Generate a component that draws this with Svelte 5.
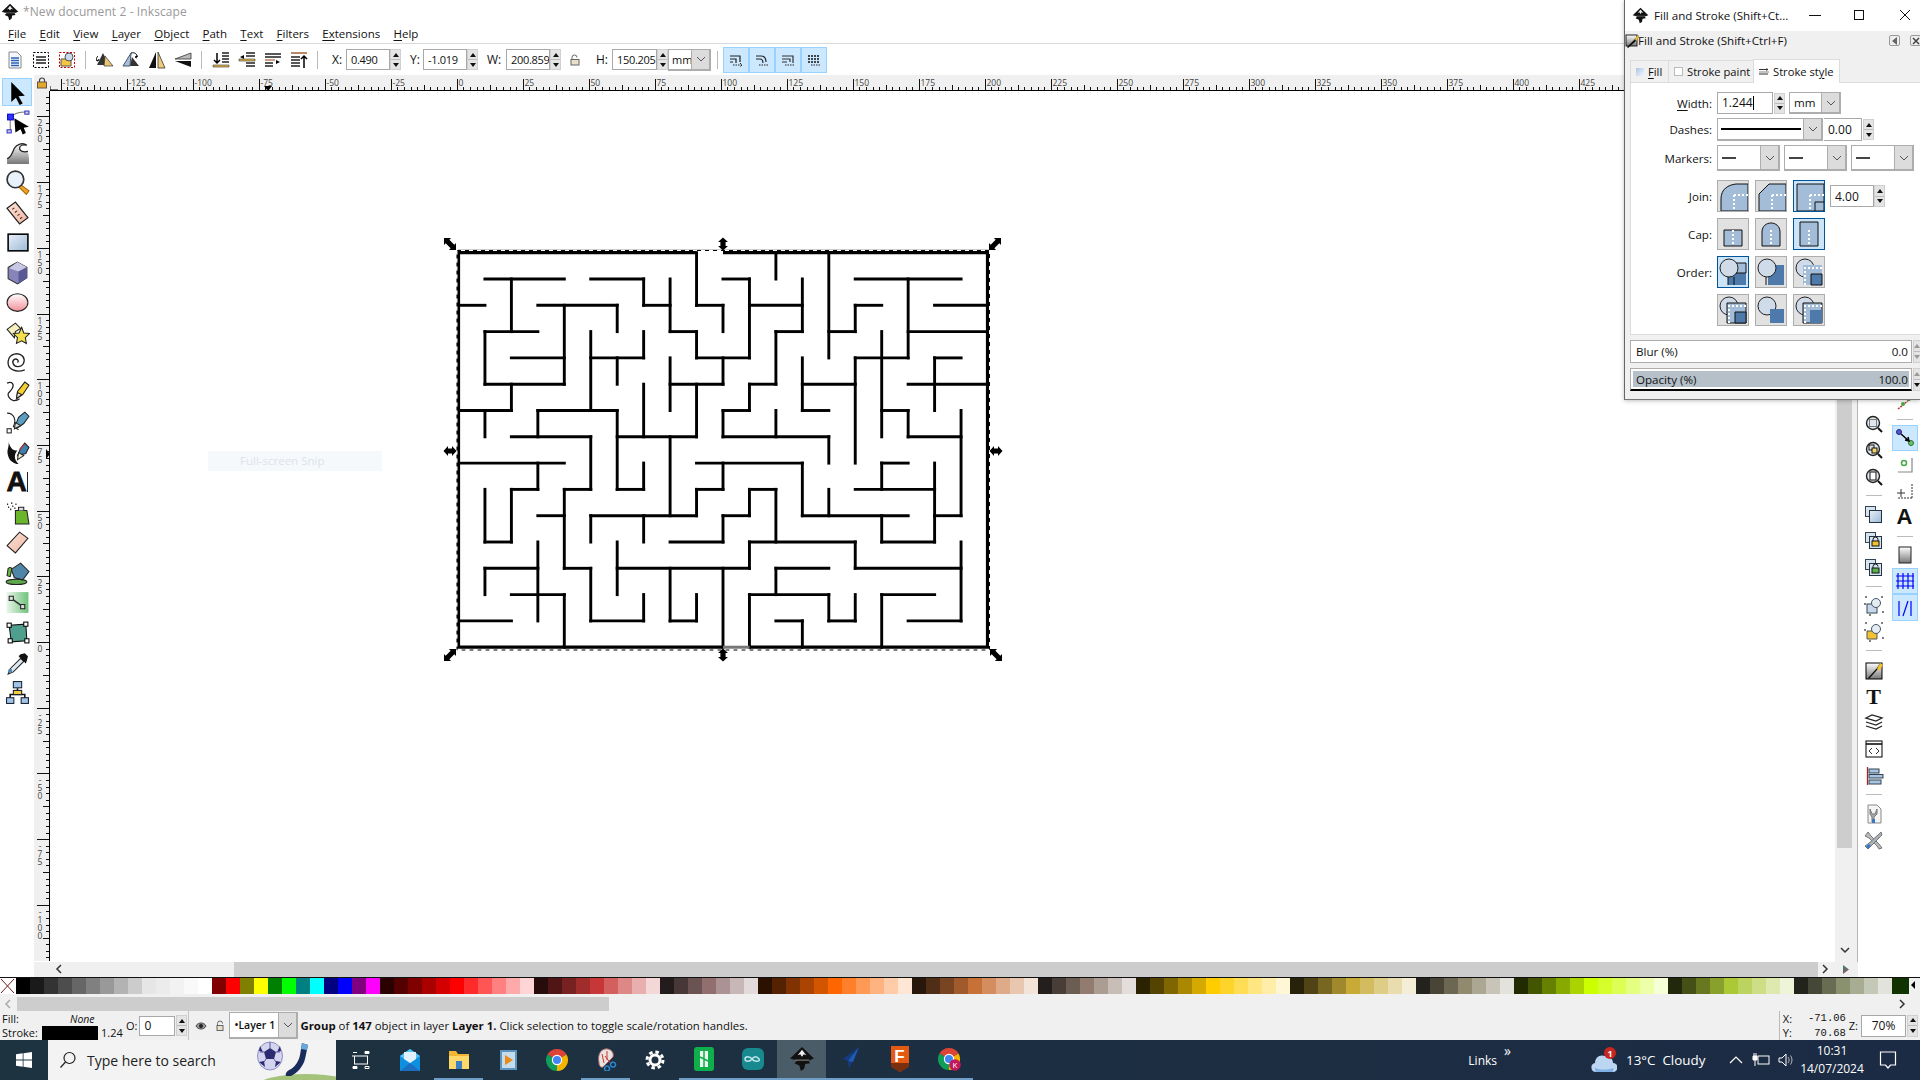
<script>
  const menus = [['F','ile'],['E','dit'],['V','iew'],['L','ayer'],['O','bject'],['P','ath'],['T','ext'],['F','ilters'],['Ex','tensions'],['H','elp']];

  const greys = ['#000','#1a1a1a','#333','#4d4d4d','#666','#808080','#999','#b3b3b3','#ccc','#e6e6e6','#ececec','#f2f2f2','#f9f9f9','#fff'];
  const basics = ['#800000','#f00','#808000','#ff0','#008000','#0f0','#008080','#0ff','#000080','#00f','#800080','#f0f'];
  const families = [
    '#2b0000,#550000,#800000,#aa0000,#d40000,#ff0000,#ff2a2a,#ff5555,#ff8080,#ffaaaa,#ffd5d5,#280b0b,#501616,#782121,#a02c2c,#c83737,#d35f5f,#de8787,#e9afaf,#f4d7d7,#241c1c,#483737,#6c5353,#916f6f,#ac9393,#c8b7b7,#e3dbdb',
    '#2b1100,#552200,#803300,#aa4400,#d45500,#ff6600,#ff7f2a,#ff9955,#ffb380,#ffccaa,#ffe6d5,#28170b,#502d16,#784421,#a05a2c,#c87137,#d38d5f,#deaa87,#e9c6af,#f4e3d7,#241f1c,#483e37,#6c5d53,#917c6f,#ac9d93,#c8beb7,#e3dedb',
    '#2b2200,#554400,#806600,#aa8800,#d4aa00,#ffcc00,#ffd42a,#ffdd55,#ffe680,#ffeeaa,#fff6d5,#28220b,#504416,#786721,#a0892c,#c8ab37,#d3bc5f,#decd87,#e9ddaf,#f4eed7,#24221c,#484537,#6c6753,#918a6f,#aca793,#c8c4b7,#e3e2db',
    '#222b00,#445500,#668000,#88aa00,#aad400,#ccff00,#d4ff2a,#ddff55,#e5ff80,#eeffaa,#f6ffd5,#22280b,#445016,#677821,#89a02c,#abc837,#bcd35f,#cdde87,#dde9af,#eef4d7,#22241c,#454837,#676c53,#8a916f,#a7ac93,#c4c8b7,#e2e3db',
    '#113300'
  ];
  const palette = [...greys, ...basics, ...families.join(',').split(',')];

  // maze walls, in cell units: [line, from, to]
  const hw = {1:'1-4,5-7,10-11,15-19',2:'0-1,3-6,7-8,9-10,11-13,15-16,18-20',3:'1-3,8-9,12-13,14-15,17-20',4:'2-4,5-7,9-11,15-17,18-19',5:'1-4,8-10,11-12,13-15,17-20',6:'0-2,3-6,10-11,13-14,16-17',7:'2-5,6-9,10-14,17-19',8:'0-4,9-13,16-17',9:'2-3,4-5,6-7,9-10,11-12,15-18',10:'3-4,5-9,10-11,13-17,18-19',11:'1-2,8-10,11-15,16-18',12:'1-3,4-5,6-11,12-14,15-19',13:'2-4,11-14,16-18',14:'0-2,5-7,8-9,12-13,14-15,17-19'};
  const vw = {1:'3-5,6-7,9-11,12-13',2:'1-3,5-6,9-11',3:'6-7,8-9,11-14',4:'2-5,9-12,13-15',5:'3-6,7-9,10-11,12-14',6:'2-3,4-5,6-9,11-13',7:'1-2,3-4,5-7,8-9,10-11,13-14',8:'1-3,4-6,7-10,12-14',9:'0-2,3-4,5-7,9-10,13-14',10:'2-3,4-5,6-7,8-9,10-11,12-15',11:'1-4,5-6,9-10,11-12,13-15',12:'0-1,3-5,6-7,9-11,12-13',13:'1-3,4-6,8-10,14-15',14:'0-4,7-8,9-10,13-14',15:'2-3,4-8,11-12,13-14',16:'3-7,8-9,10-11,13-15',17:'1-4,6-7',18:'4-6,8-11',19:'6-10,11-14'};
  const mx = (i) => 458.5 + 26.45 * i;
  const my = (j) => 252.7 + 26.3 * j;
  const walls = [];
  for (const k in hw) for (const s of hw[k].split(',')) { const [a, b] = s.split('-').map(Number); walls.push([mx(a) - 1.5, my(+k), mx(b) + 1.5, my(+k)]); }
  for (const k in vw) for (const s of vw[k].split(',')) { const [a, b] = s.split('-').map(Number); walls.push([mx(+k), my(a) - 1.5, mx(+k), my(b) + 1.5]); }

  const corners = [[450,244,-135],[995,244,-45],[450,655,135],[996,655,45]];
  const sides = [[723,244,90],[450,451,0],[996,451,0],[723,655,90]];

  // rulers
  const topTicks = [], topLabels = [];
  for (let n = -60; n < 180; n++) {
    const x = Math.round(456.7 + 6.6 * n) + 0.5;
    if (x < 52 || x > 1836) continue;
    const major = n % 10 === 0;
    topTicks.push([x, major ? 79 : n % 5 === 0 ? 85 : 87]);
    if (major) topLabels.push([x + 1, n * 2.5]);
  }
  const leftTicks = [], leftLabels = [];
  for (let n = -120; n < 90; n++) {
    const y = Math.round(642 - 6.57 * n) + 0.5;
    if (y < 93 || y > 958) continue;
    const major = n % 10 === 0;
    leftTicks.push([y, major ? 37 : n % 5 === 0 ? 43 : 46]);
    if (major) leftLabels.push([y, String(n * 2.5)]);
  }
</script>

{#snippet spin()}
  <span class="spin"><i class="up"></i><i class="dn"></i></span>
{/snippet}

{#snippet chev()}
  <span class="chev"><svg width="10" height="6" viewBox="0 0 10 6"><path d="M1 1l4 4 4-4" fill="none" stroke="#555" stroke-width="1"/></svg></span>
{/snippet}

{#snippet logo(s)}
  <svg width={s} height={s} viewBox="0 0 24 24">
    <path d="M12 1L23 11.5 18 13.5 19.5 16 15 16.5 14 21 11 23 9.5 18 5 16 7.5 13.5 1 11.5Z" fill="#111"/>
    <path d="M12 3.5L8 8.5l2.4-1L12 10l1.6-2.5 2.4 1Z" fill="#eee"/>
    <path d="M5 12.5h14l-1 1H6z" fill="#777"/>
  </svg>
{/snippet}

{#snippet chrome(badge)}
  <svg width="24" height="24" viewBox="0 0 24 24">
    <path d="M12 12L2.47 6.5A11 11 0 0 1 21.53 6.5Z" fill="#db4437"/>
    <path d="M12 12L21.53 6.5A11 11 0 0 1 12 23Z" fill="#f4b400"/>
    <path d="M12 12L12 23A11 11 0 0 1 2.47 6.5Z" fill="#0f9d58"/>
    <circle cx="12" cy="12" r="5.2" fill="#fff"/><circle cx="12" cy="12" r="4" fill="#4285f4"/>
    {#if badge}<circle cx="18" cy="18" r="5.8" fill="#c2185b"/><text x="18" y="21" font-size="8" fill="#fff" text-anchor="middle" font-family="Open Sans">K</text>{/if}
  </svg>
{/snippet}

<div class="app">
  <svg class="defs" width="0" height="0">
    <defs>
      <linearGradient id="gBlue" x1="0" y1="0" x2="1" y2="1"><stop offset="0" stop-color="#e8eff7"/><stop offset="1" stop-color="#9db9d6"/></linearGradient>
      <linearGradient id="gPink" x1="0" y1="0" x2="0" y2="1"><stop offset="0" stop-color="#fff"/><stop offset="1" stop-color="#f08f98"/></linearGradient>
      <linearGradient id="gPeach" x1="0" y1="0" x2="1" y2="1"><stop offset="0" stop-color="#fbe4da"/><stop offset="1" stop-color="#eeb5a0"/></linearGradient>
      <linearGradient id="gGrey" x1="0" y1="0" x2="0" y2="1"><stop offset="0" stop-color="#fff"/><stop offset="1" stop-color="#777"/></linearGradient>
      <linearGradient id="gGreen" x1="0" y1="0" x2="1" y2="0"><stop offset="0" stop-color="#eaf6ea"/><stop offset="1" stop-color="#6fc27c"/></linearGradient>
    </defs>
  </svg>

  <header class="titlebar">
    {@render logo(18)}
    <span class="title">*New document 2 - Inkscape</span>
  </header>

  <nav class="menubar">
    {#each menus as [u, rest]}
      <span class="menu"><u>{u}</u>{rest}</span>
    {/each}
  </nav>

  <div class="toolbar">
    <span class="tb"><svg width="20" height="20" viewBox="0 0 20 20"><path d="M4 2h8l4 4v12H4z" fill="#f4f7fb" stroke="#888"/><path d="M6 8h8M6 10.5h8M6 13h8M6 15.5h8" stroke="#2a62b8" stroke-width="1.6"/></svg></span>
    <span class="tb"><svg width="20" height="20" viewBox="0 0 20 20"><rect x="2.5" y="2.5" width="15" height="15" fill="none" stroke="#000" stroke-dasharray="2 1.5"/><path d="M5 7h10M5 10h10M5 13h10" stroke="#555" stroke-width="2"/></svg></span>
    <span class="tb"><svg width="20" height="20" viewBox="0 0 20 20"><rect x="2.5" y="2.5" width="15" height="15" fill="none" stroke="#c00" stroke-dasharray="2 1.5"/><path d="M4 9h10v7H4z" fill="#f6c544" stroke="#555"/><circle cx="12" cy="7" r="4" fill="#c8dcec" stroke="#555"/></svg></span>
    <span class="sep"></span>
    <span class="tb"><svg width="20" height="20" viewBox="0 0 20 20"><path d="M8 3l6 12H2z" fill="#333"/><path d="M10 6l8 10H9z" fill="#e8c572" stroke="#333" stroke-width=".7"/><path d="M3 6c-2 2-2 4 0 5M1 10l2 1 1-2" fill="none" stroke="#000"/></svg></span>
    <span class="tb"><svg width="20" height="20" viewBox="0 0 20 20"><path d="M10 3L2 16h7z" fill="#aac0da" stroke="#456"/><path d="M11 7l7 9h-9z" fill="#333"/><path d="M10 3c4-1 6 1 6 4M16 8l-2-1 3-1" fill="none" stroke="#000"/></svg></span>
    <span class="tb"><svg width="20" height="20" viewBox="0 0 20 20"><path d="M9 2v16H2z" fill="#111"/><path d="M11 2v16h7z" fill="#eecb7a" stroke="#333" stroke-width=".8"/></svg></span>
    <span class="tb"><svg width="20" height="20" viewBox="0 0 20 20"><path d="M2 9h16V3z" fill="#bbb" stroke="#333" stroke-width=".8"/><path d="M2 11h16v6z" fill="#111"/></svg></span>
    <span class="sep"></span>
    <span class="tb"><svg width="20" height="20" viewBox="0 0 20 20"><path d="M11 3h7M11 6h7M11 9h7M11 12h7" stroke="#222" stroke-width="1.6"/><path d="M6 3v10M3 10l3 3 3-3" fill="none" stroke="#000" stroke-width="1.5"/><path d="M2 15h16v2H2z" fill="#e8b84a" stroke="#333" stroke-width=".6"/></svg></span>
    <span class="tb"><svg width="20" height="20" viewBox="0 0 20 20"><path d="M9 3h9M9 6h9M9 13h9M9 16h9" stroke="#222" stroke-width="1.6"/><path d="M2 9h16v2H2z" fill="#e8b84a" stroke="#333" stroke-width=".6"/><path d="M7 5L3 7l4 2z" fill="#000"/></svg></span>
    <span class="tb"><svg width="20" height="20" viewBox="0 0 20 20"><path d="M2 4h16M2 7h16M2 13h8M2 16h8" stroke="#222" stroke-width="1.6"/><path d="M2 10h10" stroke="#b86" stroke-width="1.6"/><path d="M13 10l4 2-4 2z" fill="#000"/></svg></span>
    <span class="tb"><svg width="20" height="20" viewBox="0 0 20 20"><path d="M2 3h16" stroke="#b86" stroke-width="2"/><path d="M2 7h9M2 10h9M2 13h9M2 16h9" stroke="#222" stroke-width="1.6"/><path d="M15 18V6M12 9l3-3 3 3" fill="none" stroke="#000" stroke-width="1.5"/></svg></span>
    <span class="sep"></span>
    <span class="lbl lx">X:</span><span class="inp i44">0.490</span>{@render spin()}
    <span class="lbl ly">Y:</span><span class="inp i44">-1.019</span>{@render spin()}
    <span class="lbl lw">W:</span><span class="inp i44">200.859</span>{@render spin()}
    <span class="lock"><svg width="12" height="12" viewBox="0 0 12 12"><path d="M3 5V3.500a2.500 2.500 0 0 1 5 0" fill="none" stroke="#666"/><rect x="2" y="5.500" width="8" height="5.500" fill="#e8e0c8" stroke="#666"/></svg></span>
    <span class="lbl lh">H:</span><span class="inp i45">150.205</span>{@render spin()}
    <span class="sel unit"><span class="sel-t">mm</span>{@render chev()}</span>
    <span class="sep s2"></span>
    <span class="on"><svg width="14" height="14" viewBox="0 0 14 14"><path d="M1 3h10v6M1 6h6v4M1 9h3" fill="none" stroke="#222" stroke-width="1.2"/><path d="M4 12h9M11 10l2 2-2 2" stroke="#222" fill="none" stroke-dasharray="1.5 1"/></svg></span>
    <span class="on"><svg width="14" height="14" viewBox="0 0 14 14"><path d="M1 3h5c4 0 5 3 5 6M1 6h4c2 0 3 2 3 4" fill="none" stroke="#222" stroke-width="1.2"/><path d="M4 12h9" stroke="#222" stroke-dasharray="1.5 1"/></svg></span>
    <span class="on"><svg width="14" height="14" viewBox="0 0 14 14"><path d="M1 3h11v7M1 6h8v3M1 9h5" fill="none" stroke="#333" stroke-width="1.2"/><path d="M4 12h9" stroke="#222" stroke-dasharray="1.5 1"/></svg></span>
    <span class="on"><svg width="14" height="14" viewBox="0 0 14 14"><path d="M1 3h12M1 6h12M1 9h12" stroke="#111" stroke-width="1.6" stroke-dasharray="2 1"/><path d="M4 12h9" stroke="#222" stroke-dasharray="1.5 1"/></svg></span>
  </div>

  <div class="main">
    <aside class="tools">
      <span class="tool active"><svg viewBox="0 0 24 24"><path d="M6 2l13 13-6 .5 4 7-3 1.5-3.5-7L6 21z" fill="#000"/></svg></span>
      <span class="tool"><svg viewBox="0 0 24 24"><path d="M5 7C8 4 13 2 20 2M5 9v11" fill="none" stroke="#777"/><rect x="2.500" y="4" width="5.500" height="5.500" fill="#33f" stroke="#00c"/><rect x="19" y="1" width="4" height="3" fill="#ccd" stroke="#33c"/><rect x="2" y="19" width="4" height="3" fill="#ccd" stroke="#33c"/><path d="M9 8l14 8-5 1 2 5-3 1.500-2-5-5 3z" fill="#000"/></svg></span>
      <span class="tool"><svg viewBox="0 0 24 24"><path d="M2 23V18C6 17 7 12 9 8c2-4 8-6 12-3-4-1-7 0-7 3 0 3 4 4 8 3l1 6v6z" fill="url(#gGrey)" stroke="none"/><path d="M2 18C6 17 7 12 9 8c2-4 8-6 12-3-4-1-7 0-7 3 0 3 4 4 8 3" fill="none" stroke="#222" stroke-width="1.200"/></svg></span>
      <span class="tool"><svg viewBox="0 0 24 24"><path d="M15 14l8 6-2.500 3.500-7.500-7.500z" fill="#f2a32c" stroke="#a60"/><circle cx="10" cy="9" r="8" fill="#e9f2fa" stroke="#333" stroke-width="1.600"/></svg></span>
      <span class="tool"><svg viewBox="0 0 24 24"><path d="M2 8l8-6 12 15-8 6z" fill="url(#gPeach)" stroke="#222" stroke-width="1.200"/><path d="M7 9l2-1.500M9.500 12l2-1.500M12 15l2-1.500M14.500 18l2-1.500" stroke="#522"/></svg></span>
      <span class="tool"><svg viewBox="0 0 24 24"><rect x="3" y="4" width="19" height="16" fill="url(#gBlue)" stroke="#000" stroke-width="1.500"/></svg></span>
      <span class="tool"><svg viewBox="0 0 24 24"><path d="M12 2l9 5v10l-9 6-9-5V7z" fill="#8684b8" stroke="#333"/><path d="M12 2l9 5-8 4-9-3z" fill="#c9c8e4"/><path d="M13 11l8-4v10l-8 6z" fill="#5a5996"/></svg></span>
      <span class="tool"><svg viewBox="0 0 24 24"><ellipse cx="12" cy="12" rx="10" ry="8.500" fill="url(#gPink)" stroke="#222"/></svg></span>
      <span class="tool"><svg viewBox="0 0 24 24"><path d="M2 9l8-6 5 5-5 3-1 6z" fill="#f6efc0" stroke="#222"/><path d="M16 7l2 5.500 5.500.5-4 4 1 5.500-4.500-2.500-5 2.500 1-5.500-4-4 5.500-.5z" fill="#f4e04c" stroke="#222"/></svg></span>
      <span class="tool"><svg viewBox="0 0 24 24"><path d="M12 12c2-2-1-4-3-3-3 2-1 7 3 7 6 0 8-6 5-10-4-4-13-3-14 5-1 8 8 11 16 8" fill="none" stroke="#222" stroke-width="1.300"/></svg></span>
      <span class="tool"><svg viewBox="0 0 24 24"><path d="M2 3c5-2 7 1 5 5S1 12 4 17c2 3 6 4 10 1" fill="none" stroke="#222" stroke-width="1.200"/><path d="M11 18l1-7 7-9 4 3-6 9z" fill="#f4cf2e" stroke="#222"/><path d="M11 18l1-6 4 2z" fill="#f6e8c8" stroke="#222"/></svg></span>
      <span class="tool"><svg viewBox="0 0 24 24"><path d="M2 3c7 0 9 7 6 13l5 3" fill="none" stroke="#222"/><rect x="2" y="18" width="4" height="4" fill="#fff" stroke="#222"/><path d="M10 15l3-8 6-5 4 4-5 7-6 4z" fill="#5a9ec4" stroke="#222"/><path d="M9 18l1-6 5 3z" fill="#ddd" stroke="#222"/></svg></span>
      <span class="tool"><svg viewBox="0 0 24 24"><path d="M3 1c2 5-2 8 0 14 1 5 6 8 10 8-5-5-4-10-1-13-5 1-7-3-9-9z" fill="#111"/><path d="M12 15l3-7 4-5 4 4-3 6z" fill="#3f7fb0" stroke="#222"/><path d="M12 19l1-7 5 3z" fill="#f4f0d8" stroke="#222"/><path d="M14 9l5-5" stroke="#c33"/></svg></span>
      <span class="tool txt"><span class="ta">A</span><i class="tbar"></i></span>
      <span class="tool"><svg viewBox="0 0 24 24"><path d="M2 4h1M6 3h1M3 7h1M7 6h1M10 4h1M5 9h1M9 8h1" stroke="#111" stroke-width="1.500"/><path d="M10 10h11l2 13H10z" fill="#6ab52c" stroke="#222"/><path d="M13 10V7h5v3" fill="#ddd" stroke="#222"/></svg></span>
      <span class="tool"><svg viewBox="0 0 24 24"><path d="M2 15L14 2l8 6-12 14z" fill="url(#gPeach)" stroke="#222"/></svg></span>
      <span class="tool"><svg viewBox="0 0 24 24"><ellipse cx="11" cy="21" rx="10" ry="2.500" fill="#5ea94c" stroke="#222"/><path d="M6 9l9-6 8 8-6 8-8-2z" fill="#4f86a8" stroke="#222"/><path d="M3 8c3-2 4 0 3 3l-1 5-3-1z" fill="#72b83c" stroke="#222"/></svg></span>
      <span class="tool"><svg viewBox="0 0 24 24"><rect x="1.500" y="2" width="21" height="20" fill="url(#gGreen)"/><path d="M6 8l11 8" stroke="#333" stroke-width="1.500"/><rect x="4" y="6" width="4" height="4" fill="#ddd" stroke="#222"/><rect x="15" y="14" width="4" height="4" fill="#ddd" stroke="#222"/></svg></span>
      <span class="tool"><svg viewBox="0 0 24 24"><path d="M4 5l16-1 1 16-15 1z" fill="#4f9e8e" stroke="#111"/><rect x="2" y="3" width="4" height="4" fill="#fff" stroke="#000"/><rect x="18" y="2" width="4" height="4" fill="#fff" stroke="#000"/><rect x="3" y="18" width="4" height="4" fill="#fff" stroke="#000"/><rect x="19" y="18" width="4" height="4" fill="#fff" stroke="#000"/></svg></span>
      <span class="tool"><svg viewBox="0 0 24 24"><path d="M15 8L5 18l-2 5 5-2L18 11z" fill="#dde8f0" stroke="#222"/><path d="M13 6l7 7 1-3 1-4-3-3-4 1z" fill="#111"/><circle cx="5" cy="20" r="2" fill="#4f86b8"/></svg></span>
      <span class="tool"><svg viewBox="0 0 24 24"><path d="M12 8v4M5 18v-4h14v4" fill="none" stroke="#111" stroke-width="1.500"/><rect x="8" y="1.500" width="8" height="6" fill="#a3c4e4" stroke="#123"/><rect x="8" y="10" width="8" height="4" fill="#f6ca38" stroke="#123"/><rect x="1.500" y="17" width="7" height="5.500" fill="#a3c4e4" stroke="#123"/><rect x="15.500" y="17" width="7" height="5.500" fill="#a3c4e4" stroke="#123"/></svg></span>
    </aside>

    <div class="center">
      <div class="corner">
        <svg width="12" height="12" viewBox="0 0 12 12"><path d="M3.500 5V3.500a2.500 2.500 0 0 1 5 0V5" fill="none" stroke="#444" stroke-width="1.200"/><rect x="1.500" y="5" width="9" height="6" fill="#e0a92e" stroke="#654"/></svg>
      </div>
      <svg class="hruler" width="1787" height="16" viewBox="50 75 1787 16">
        <path d="M50 86v4h8" fill="none" stroke="#000"/>
        <path d="M50 90.500H1837" stroke="#000"/>
        {#each topTicks as [x, y]}<path d="M{x} {y}V90" stroke="#111"/>{/each}
        {#each topLabels as [x, v]}<text x={x} y="86" class="rt">{v}</text>{/each}
        <path d="M264 86h8l-4 5z" fill="#000"/>
      </svg>
      <svg class="vruler" width="16" height="870" viewBox="34 91 16 870">
        <path d="M49.500 91V961" stroke="#000"/>
        {#each leftTicks as [y, x]}<path d="M{x} {y}H49" stroke="#111"/>{/each}
        {#each leftLabels as [y, v]}
          {#each v.split('') as ch, i}<text x="40" y={y + 9 + i * 8} class="rt" text-anchor="middle">{ch}</text>{/each}
        {/each}
        <path d="M46 449v10l4-5z" fill="#000"/>
      </svg>

      <div class="canvas">
        <div class="snip">Full-screen Snip</div>
        <svg class="maze" width="1785" height="870" viewBox="50 91 1785 870">
          <path d="M458 250H990" stroke="#999" fill="none"/>
          {#each walls as [x1, y1, x2, y2]}<line x1={x1} y1={y1} x2={x2} y2={y2} stroke="#000" stroke-width="2.900"/>{/each}
          <path d="M696.500 252.700H458.500V647.200H723M749.500 647.200H987.500V252.700H723" fill="none" stroke="#000" stroke-width="3.200"/>
          <path d="M723 647.200H749.500" stroke="#777" stroke-width="3" fill="none"/>
          <path d="M457 250.500H989.500V650H457Z" fill="none" stroke="#000" stroke-width="1" stroke-dasharray="4 4"/>
          <path d="M457 250.500H989.500V650H457Z" fill="none" stroke="#fff" stroke-width="1" stroke-dasharray="4 4" stroke-dashoffset="4"/>
          {#each corners as [x, y, a]}
            <path transform="translate({x} {y}) rotate({a})" d="M-8.500 0L-3.500-5V-2.600H3.500V-5L8.500 0 3.500 5V2.600H-3.500V5Z" fill="#000"/>
          {/each}
          {#each sides as [x, y, a]}
            <path transform="translate({x} {y}) rotate({a})" d="M-6.500 0L-2-5V-2.600H2V-5L6.500 0 2 5V2.600H-2V5Z" fill="#000"/>
          {/each}
        </svg>
      </div>

      <div class="vscroll">
        <div class="vthumb"></div>
        <svg class="varrow" width="10" height="8" viewBox="0 0 10 8"><path d="M1 1l4 4 4-4" fill="none" stroke="#333" stroke-width="1.500"/></svg>
      </div>

      <div class="hscroll">
        <svg class="harrow" width="8" height="10" viewBox="0 0 8 10"><path d="M6 1L2 5l4 4" fill="none" stroke="#333" stroke-width="1.500"/></svg>
        <div class="hthumb"></div>
        <svg class="harrow2" width="8" height="10" viewBox="0 0 8 10"><path d="M2 1l4 4-4 4" fill="none" stroke="#333" stroke-width="1.500"/></svg>
        <span class="hcolor"></span>
      </div>
    </div>

    <aside class="cmds">
      <span class="cmd"><svg viewBox="0 0 20 20"><circle cx="9" cy="9" r="6.500" fill="#dfe6ec" stroke="#222" stroke-width="1.400"/><rect x="5.500" y="5.500" width="7" height="7" fill="none" stroke="#111" stroke-dasharray="1 1"/><path d="M14 14l4 4" stroke="#111" stroke-width="2"/></svg></span>
      <span class="cmd"><svg viewBox="0 0 20 20"><circle cx="9" cy="9" r="6.500" fill="#dfe6ec" stroke="#222" stroke-width="1.400"/><rect x="5" y="5" width="5" height="5" fill="none" stroke="#111"/><rect x="8" y="8" width="5" height="5" fill="#f5d46a" stroke="#111"/><path d="M14 14l4 4" stroke="#111" stroke-width="2"/></svg></span>
      <span class="cmd"><svg viewBox="0 0 20 20"><circle cx="9" cy="9" r="6.500" fill="#dfe6ec" stroke="#222" stroke-width="1.400"/><rect x="6" y="5" width="6" height="8" fill="#fff" stroke="#111"/><path d="M14 14l4 4" stroke="#111" stroke-width="2"/></svg></span>
      <span class="csep"></span>
      <span class="cmd"><svg viewBox="0 0 20 20"><rect x="1.500" y="1.500" width="10" height="10" fill="#d6e4f0" stroke="#345"/><rect x="5.500" y="5.500" width="12" height="12" fill="url(#gBlue)" stroke="#234"/></svg></span>
      <span class="cmd"><svg viewBox="0 0 20 20"><rect x="1.500" y="1.500" width="10" height="10" fill="#d6e4f0" stroke="#345"/><rect x="5.500" y="5.500" width="12" height="12" fill="#d6e4f0" stroke="#234"/><path d="M9 10V8.500a2.500 2.500 0 0 1 5 0V10" fill="none" stroke="#111"/><rect x="8" y="10" width="7" height="5" fill="#f2c230" stroke="#111"/></svg></span>
      <span class="cmd"><svg viewBox="0 0 20 20"><rect x="1.500" y="1.500" width="10" height="10" fill="#d6e4f0" stroke="#345"/><rect x="5.500" y="5.500" width="12" height="12" fill="#d6e4f0" stroke="#234"/><path d="M9 10V8.500a2.500 2.500 0 0 1 5 0" fill="none" stroke="#111"/><rect x="8" y="10" width="7" height="5" fill="#5ab04c" stroke="#111"/></svg></span>
      <span class="csep"></span>
      <span class="cmd"><svg viewBox="0 0 20 20"><rect x="1" y="1" width="18" height="18" fill="none" stroke="#000" stroke-dasharray="2 14"/><rect x="3" y="8" width="10" height="9" fill="#c8d8e8" stroke="#345"/><circle cx="12" cy="7" r="4.500" fill="#e4ecf2" stroke="#456"/></svg></span>
      <span class="cmd"><svg viewBox="0 0 20 20"><rect x="1" y="1" width="18" height="18" fill="none" stroke="#000" stroke-dasharray="2 14"/><path d="M3 9h10v8H3z" fill="#f2c230" stroke="#555"/><circle cx="12" cy="7" r="4.500" fill="#e4ecf2" stroke="#456"/></svg></span>
      <span class="csep"></span>
      <span class="cmd"><svg viewBox="0 0 20 20"><rect x="2" y="2" width="16" height="16" fill="url(#gGrey)" stroke="#000"/><path d="M4 17l9-10 3-5 2 3-5 4-8 9z" fill="#111"/><path d="M13 8l3-6 3 2-4 6z" fill="#f2c230"/></svg></span>
      <span class="cmd"><span class="tT">T</span></span>
      <span class="cmd"><svg viewBox="0 0 20 20"><path d="M2 5l6-3 10 3-6 3zM2 9l10 3 6-3M2 13l10 3 6-3" fill="none" stroke="#222" stroke-width="1.300"/></svg></span>
      <span class="cmd"><svg viewBox="0 0 20 20"><rect x="2" y="2" width="16" height="16" fill="#fff" stroke="#000"/><path d="M2 5h16" stroke="#000" stroke-width="1.500"/><path d="M8 9l-3 3 3 3M12 9l3 3-3 3" fill="none" stroke="#333"/></svg></span>
      <span class="cmd"><svg viewBox="0 0 20 20"><path d="M3.500 1v18" stroke="#a22" stroke-width="1.300"/><rect x="5" y="3" width="10" height="4" fill="#a8c4e0" stroke="#345"/><rect x="5" y="8.500" width="14" height="3.500" fill="#a8c4e0" stroke="#345"/><rect x="5" y="14" width="12" height="4" fill="#a8c4e0" stroke="#345"/></svg></span>
      <span class="csep"></span>
      <span class="cmd"><svg viewBox="0 0 20 20"><path d="M4 1h9l4 4v14H4z" fill="#f4f4f4" stroke="#888"/><path d="M6 5l2 5h3l2-5v5l-3 3v5H8v-5L6 10z" fill="#aaa" stroke="#777"/><path d="M8 15h3v4H8z" fill="#3a78c2"/></svg></span>
      <span class="cmd"><svg viewBox="0 0 20 20"><path d="M4 2l3 4 8 8 3 4-3 1-2-3-8-8-4-2z" fill="#bbb" stroke="#777"/><path d="M17 2l1 3-11 11-3 3-3-3 3-2L15 4z" fill="#a8b0b8" stroke="#777"/><path d="M2 16l3-2 2 2-3 3z" fill="#3a78c2"/></svg></span>
    </aside>

    <aside class="snaps">
      <span class="sn hit"><svg viewBox="0 0 20 20"><path d="M3 15L15 5" stroke="#b33" stroke-width="1.500" stroke-dasharray="2 1"/><circle cx="14" cy="5" r="2" fill="#4a4"/><circle cx="8" cy="10" r="2" fill="#4a4"/></svg></span>
      <span class="ssep"></span>
      <span class="sn act"><svg viewBox="0 0 20 20"><circle cx="4" cy="4" r="2.500" fill="#55c" stroke="#228"/><circle cx="16" cy="15" r="2.500" fill="#7b7" stroke="#272"/><path d="M6 6l8 7M10 12l4 1-1-4" fill="none" stroke="#000" stroke-width="1.500"/></svg></span>
      <span class="sn"><svg viewBox="0 0 20 20"><path d="M17 3v14H3" fill="none" stroke="#888" stroke-width="1.200"/><circle cx="9" cy="8" r="2.500" fill="#fff" stroke="#4a4" stroke-width="1.500"/></svg></span>
      <span class="sn"><svg viewBox="0 0 20 20"><path d="M17 3v14M3 17h14" fill="none" stroke="#333" stroke-dasharray="2 1"/><path d="M6 8v8M2 12h8" stroke="#333"/></svg></span>
      <span class="sn txt2"><span class="sa">A</span></span>
      <span class="ssep"></span>
      <span class="sn"><svg viewBox="0 0 20 20"><rect x="4" y="2" width="12" height="16" fill="url(#gGrey)" stroke="#222"/></svg></span>
      <span class="sn act"><svg viewBox="0 0 20 20"><path d="M3 2v16M8 2v16M13 2v16M18 2v16M1 5h18M1 10h18M1 15h18" stroke="#00f" stroke-width="1.200"/></svg></span>
      <span class="sn act"><svg viewBox="0 0 20 20"><path d="M4 3v15M16 3v15M13 3l-5 15" stroke="#00f" stroke-width="1.200"/></svg></span>
    </aside>
  </div>

  <div class="palette">
    <span class="none"><svg width="16" height="16" viewBox="0 0 16 16"><path d="M1 1l13 14M14 1L1 15" stroke="#6a1a1a" fill="none"/></svg></span>
    {#each palette as c}<i class="sw" style="background:{c}"></i>{/each}
    <svg class="parrow" width="6" height="10" viewBox="0 0 6 10"><path d="M5 1L1 5l4 4z" fill="#000"/></svg>
  </div>

  <div class="hscroll2">
    <svg width="8" height="10" viewBox="0 0 8 10" class="pa"><path d="M6 1L2 5l4 4" fill="none" stroke="#aaa" stroke-width="1.500"/></svg>
    <div class="p-thumb"></div>
    <svg width="8" height="10" viewBox="0 0 8 10" class="pb"><path d="M2 1l4 4-4 4" fill="none" stroke="#333" stroke-width="1.500"/></svg>
  </div>

  <footer class="status">
    <div class="fs-block">
      <div class="fs-row"><span class="fl">Fill:</span><em class="none-t">None</em></div>
      <div class="fs-row"><span class="fl st">Stroke:</span><span class="swatch"></span><span class="w">1.24</span></div>
    </div>
    <span class="o">O:</span>
    <span class="inp o-in">0</span>
    {@render spin()}
    <span class="vline"></span>
    <svg class="eye" width="12" height="12" viewBox="0 0 12 12"><path d="M1 6c2-4 8-4 10 0-2 4-8 4-10 0z" fill="#999" stroke="#444"/><circle cx="6" cy="6" r="2" fill="#222"/></svg>
    <svg class="lk" width="12" height="12" viewBox="0 0 12 12"><path d="M3.500 5V3.500a2.500 2.500 0 0 1 5 0" fill="none" stroke="#666"/><rect x="3" y="5.500" width="6" height="5" fill="#e8e0c8" stroke="#666"/></svg>
    <span class="sel layer"><span class="sel-t">•Layer 1</span>{@render chev()}</span>
    <span class="msg"><b>Group</b> of <b>147</b> object in layer <b>Layer 1.</b> Click selection to toggle scale/rotation handles.</span>
    <div class="coords">
      <div class="cr"><span>X:</span><code>-71.06</code></div>
      <div class="cr"><span>Y:</span><code>70.68</code></div>
    </div>
    <span class="z">Z:</span>
    <span class="inp z-in">70%</span>
    {@render spin()}
  </footer>

  <div class="taskbar">
    <span class="start"><svg width="16" height="16" viewBox="0 0 16 16"><path d="M0 2.200L6.700 1.300V7.600H0zM7.500 1.200L16 0V7.600H7.500zM0 8.400H6.700V14.700L0 13.800zM7.500 8.400H16V16L7.500 14.800z" fill="#fff"/></svg></span>
    <div class="search">
      <svg width="18" height="18" viewBox="0 0 18 18"><circle cx="10.500" cy="7" r="5.500" fill="none" stroke="#222" stroke-width="1.200"/><path d="M6.500 11L1.500 16.500" stroke="#222" stroke-width="1.200"/></svg>
      <span>Type here to search</span>
      <svg class="promo" width="92" height="40" viewBox="0 0 92 40">
        <ellipse cx="62" cy="47" rx="50" ry="13" fill="#a4c27a"/>
        <ellipse cx="26" cy="16" rx="12.500" ry="14" fill="#d4d4ee" stroke="#8f8fc8"/><path d="M26 8l6 4-2 7h-8l-2-7z" fill="#2c2a70"/><path d="M16 6l-1 5 4 1zM36 6l1 5-4 1zM15 22l5-1 1 6zM37 22l-5-1-1 6z" fill="#2c2a70"/><path d="M26 2v6M16 12l4 0M36 12l-4 0M22 19l-2 3M30 19l2 3" stroke="#5a58a0"/>
        <path d="M58 3l6 2-3 14c-2 8-8 14-14 17h-5c-1-3 1-5 5-7 5-3 8-9 9-14z" fill="#1a2c5a"/><path d="M58 3l6 2-1 5-6-1z" fill="#6ad"/>
      </svg>
    </div>
    <span class="tk"><svg width="20" height="20" viewBox="0 0 20 20"><path d="M2 2.500h4M2 17.500h4M2 5v2M14 2.500h4" stroke="#fff"/><rect x="3.500" y="6" width="13" height="8" fill="none" stroke="#fff"/><path d="M14 1.500h4v2h-4zM2 16.500h4v2H2zM14 16.500h4v2h-4z" fill="none" stroke="#fff"/></svg></span>
    <span class="tk"><svg width="24" height="24" viewBox="0 0 24 24"><path d="M12 1L22 8v15H2V8z" fill="#0f8fe0"/><path d="M2 8l10 7 10-7-10-7z" fill="#55c2f5"/><path d="M6 4h12v7l-6 4-6-4z" fill="#dff2fb"/><path d="M2 23l10-8 10 8z" fill="#1c6fc0"/></svg></span>
    <span class="tk line"><svg width="24" height="24" viewBox="0 0 24 24"><path d="M2 4h7l2 3h11v15H2z" fill="#f2b632"/><path d="M2 9h20v13H2z" fill="#fcd968"/><rect x="9" y="14" width="6" height="8" fill="#3e7fc4"/></svg></span>
    <span class="tk"><svg width="24" height="24" viewBox="0 0 24 24"><rect x="4" y="2" width="17" height="20" fill="#5d93bf"/><rect x="6" y="4" width="13" height="16" fill="#c6dceb"/><path d="M9 7l8 5-8 5z" fill="#ea8a17"/></svg></span>
    <span class="tk">{@render chrome(false)}</span>
    <span class="tk line"><svg width="24" height="24" viewBox="0 0 24 24"><path d="M5 16C3 6 8 1 14 2c4 1 6 4 5 8L9 20c-2 1-4-1-4-4z" fill="#e9e3e0" stroke="#a66"/><path d="M13 4v9M11 9l6 8M8 7l2 9" stroke="#c33"/><path d="M13 19a2.500 2.500 0 1 0 .1 0M19 15a2.500 2.500 0 1 0 .1 0" fill="none" stroke="#2a8ad4" stroke-width="1.500"/></svg></span>
    <span class="tk"><svg width="22" height="22" viewBox="0 0 22 22"><circle cx="11" cy="11" r="5" fill="none" stroke="#fff" stroke-width="3"/><circle cx="11" cy="11" r="8" fill="none" stroke="#fff" stroke-width="3" stroke-dasharray="3.500 2.800"/></svg></span>
    <span class="tk line"><svg width="24" height="26" viewBox="0 0 24 26"><rect x="2" y="1" width="20" height="24" rx="3" fill="#0fb04c"/><rect x="8" y="5" width="8" height="16" fill="#eaf7ee"/><path d="M12 5v16M8 11l8 4" stroke="#0fb04c" stroke-width="1.500"/></svg></span>
    <span class="tk line"><svg width="26" height="26" viewBox="0 0 26 26"><rect x="2" y="2" width="22" height="22" rx="6" fill="#17898f"/><path d="M12 13c-2-3-7-3-7 0s5 3 7 0 5-3 7 0-5 3-7 0z" fill="none" stroke="#bfe8ea" stroke-width="1.500"/></svg></span>
    <span class="tk cur">{@render logo(26)}</span>
    <span class="tk line"><svg width="24" height="26" viewBox="0 0 24 26"><path d="M20 1L4 13l5 2 1 8z" fill="#163a80"/><path d="M20 1l-6 15-5-1z" fill="#1f5bb4"/></svg></span>
    <span class="tk line"><svg width="24" height="28" viewBox="0 0 24 28"><path d="M3 1h18v20l-9 6-9-6z" fill="#e45a12"/><path d="M3 18h18v4l-9 5-9-5z" fill="#7a3010"/></svg><b class="fz">F</b></span>
    <span class="tk line">{@render chrome(true)}</span>

    <div class="tray">
      <span class="links">Links</span>
      <span class="more">»</span>
      <span class="weather">
        <svg width="26" height="26" viewBox="0 0 26 26"><path d="M5 25a4.500 4.500 0 0 1-1-8.900C4 10 9 7 14 9c5 0 8 3 8 7a4.500 4.500 0 0 1 0 9z" fill="#bcd6f2"/><path d="M5 25a4.500 4.500 0 0 1-1-4c5 2 13 2 18 0 1 2 0 4-1 4z" fill="#7fb1e6"/><circle cx="19" cy="6" r="6" fill="#c8261e"/><text x="19" y="9.500" class="tx-1">1</text></svg>
      </span>
      <span class="temp">13°C&nbsp; Cloudy</span>
      <svg class="caret" width="14" height="10" viewBox="0 0 14 10"><path d="M1 8l6-6 6 6" fill="none" stroke="#fff" stroke-width="1.200"/></svg>
      <svg class="batt" width="18" height="16" viewBox="0 0 18 16"><rect x="6" y="4" width="11" height="8" fill="none" stroke="#fff"/><path d="M1 4h4v4H1zM3 8v6M2 1v3M4 1v3" fill="#fff" stroke="#fff"/></svg>
      <svg class="vol" width="18" height="18" viewBox="0 0 18 18"><path d="M2 7h3l4-4v12l-4-4H2z" fill="none" stroke="#fff"/><path d="M11 6c1.500 2 1.500 4 0 6M13.500 4.500c2 3 2 6 0 9" fill="none" stroke="#bbb"/></svg>
      <span class="clock"><span>10:31</span><span>14/07/2024</span></span>
      <svg class="note" width="18" height="20" viewBox="0 0 18 20"><path d="M1.500 2h15v13h-5l-2.500 3-2.500-3h-5z" fill="none" stroke="#fff" stroke-width="1.200"/></svg>
    </div>
  </div>

  <section class="win">
    <div class="win-title">
      {@render logo(17)}
      <span class="wt">Fill and Stroke (Shift+Ct...</span>
      <svg class="wc min" width="12" height="12" viewBox="0 0 12 12"><path d="M0 6.500h12" stroke="#111"/></svg>
      <svg class="wc max" width="12" height="12" viewBox="0 0 12 12"><rect x="1.500" y="1.500" width="9" height="9" fill="none" stroke="#111"/></svg>
      <svg class="wc cls" width="12" height="12" viewBox="0 0 12 12"><path d="M1 1l10 10M11 1L1 11" stroke="#111"/></svg>
    </div>
    <div class="dock-head">
      <svg width="14" height="14" viewBox="0 0 14 14"><rect x="1" y="1" width="11" height="11" fill="url(#gGrey)" stroke="#222"/><path d="M2 13l8-8 3-4 1 2-4 5-7 6z" fill="#111"/><path d="M10 5l3-4 1 2-3 4z" fill="#f2c230"/></svg>
      <span class="dt">Fill and Stroke (Shift+Ctrl+F)</span>
      <span class="dbtn one"><svg width="6" height="8" viewBox="0 0 6 8"><path d="M5 0v8L0 4z" fill="#666"/></svg></span>
      <span class="dbtn two"><svg width="8" height="8" viewBox="0 0 8 8"><path d="M1 1l6 6M7 1L1 7" stroke="#444" stroke-width="1.500"/></svg></span>
    </div>
    <div class="tabs">
      <span class="tab t1"><i class="ico-fill"></i><span><u>F</u>ill</span></span>
      <span class="tab t2"><i class="ico-st"></i><span>Stroke paint</span></span>
      <span class="tab t3"><svg width="10" height="8" viewBox="0 0 10 8"><path d="M0 1.500h9M0 6h9" stroke="#333"/><path d="M7 0l2 1.500-2 1.500M0 4h10" stroke="#333" stroke-width=".6" fill="none"/></svg><span>Stroke st<u>y</u>le</span></span>
    </div>
    <div class="tab-body">
      <div class="row r-w">
        <label><u>W</u>idth:</label>
        <span class="inp w-in"><span class="caret-t">1.244</span></span>
        {@render spin()}
        <span class="sel w-unit"><span class="sel-t">mm</span>{@render chev()}</span>
      </div>
      <div class="row r-d">
        <label>Dashes:</label>
        <span class="sel dash"><span class="sel-t"><span class="dash-line"></span></span>{@render chev()}</span>
        <span class="inp d-in">0.00</span>
        {@render spin()}
      </div>
      <div class="row r-m">
        <label>Markers:</label>
        <span class="sel mark"><span class="sel-t"><span class="mark-line"></span></span>{@render chev()}</span>
        <span class="sel mark"><span class="sel-t"><span class="mark-line"></span></span>{@render chev()}</span>
        <span class="sel mark"><span class="sel-t"><span class="mark-line"></span></span>{@render chev()}</span>
      </div>
      <div class="row r-i">
        <label>Join:</label>
        <span class="ib"><svg viewBox="0 0 30 30"><path d="M3 30V18C3 8 10 4 18 3H30V30Z" fill="#a3bcd8" stroke="#111"/><path d="M16 14H30M16 14V30" stroke="#fff" stroke-width="2" stroke-dasharray="2 2" fill="none"/></svg></span>
        <span class="ib"><svg viewBox="0 0 30 30"><path d="M3 30V13L13 3H30V30Z" fill="#a3bcd8" stroke="#111"/><path d="M16 14H30M16 14V30" stroke="#fff" stroke-width="2" stroke-dasharray="2 2" fill="none"/></svg></span>
        <span class="ib ac"><svg viewBox="0 0 30 30"><path d="M3 30V3H30V30Z" fill="#a3bcd8" stroke="#111"/><path d="M16 14H30M16 14V30" stroke="#fff" stroke-width="2" stroke-dasharray="2 2" fill="none"/><path d="M21 30V21H30" fill="none" stroke="#111"/></svg></span>
        <span class="inp m-in">4.00</span>
        {@render spin()}
      </div>
      <div class="row r-i">
        <label>Cap:</label>
        <span class="ib"><svg viewBox="0 0 30 30"><path d="M6 27V11H24V27Z" fill="#a3bcd8" stroke="#111"/><path d="M15 11V27" stroke="#fff" stroke-width="2" stroke-dasharray="2 2"/></svg></span>
        <span class="ib"><svg viewBox="0 0 30 30"><path d="M6 27V13C6 1 24 1 24 13V27Z" fill="#a3bcd8" stroke="#111"/><path d="M15 11V27" stroke="#fff" stroke-width="2" stroke-dasharray="2 2"/></svg></span>
        <span class="ib ac"><svg viewBox="0 0 30 30"><path d="M6 27V3H24V27Z" fill="#a3bcd8" stroke="#111"/><path d="M15 11V27" stroke="#fff" stroke-width="2" stroke-dasharray="2 2"/></svg></span>
      </div>
      <div class="row r-i">
        <label>Order:</label>
        <span class="ib ac"><svg viewBox="0 0 30 30"><path d="M10 28V14H28V28Z" fill="#4d7aab"/><path d="M18 6H28V16H18" fill="#a3bcd8" stroke="#111"/><circle cx="11" cy="11" r="9" fill="#cfdbe8" stroke="#222"/><path d="M10 20V28M16 20V28" stroke="#111"/></svg></span>
        <span class="ib"><svg viewBox="0 0 30 30"><path d="M12 28V8H28V28Z" fill="#4d7aab"/><circle cx="11" cy="11" r="9" fill="#cfdbe8" stroke="#222"/><path d="M10 20V28" stroke="#111"/></svg></span>
        <span class="ib"><svg viewBox="0 0 30 30"><circle cx="11" cy="11" r="9" fill="#cfdbe8" stroke="#222"/><path d="M9 28V8H28V28Z" fill="#a3bcd8"/><path d="M17 28V17H28V28Z" fill="#4d7aab" stroke="#111"/><path d="M11 28V11H28" fill="none" stroke="#fff" stroke-width="2" stroke-dasharray="2 2"/></svg></span>
      </div>
      <div class="row r-i">
        <label></label>
        <span class="ib"><svg viewBox="0 0 30 30"><circle cx="11" cy="11" r="9" fill="#cfdbe8" stroke="#222"/><path d="M9 28V8H28V28Z" fill="#a3bcd8" stroke="#111"/><path d="M17 28V17H28V28Z" fill="#4d7aab" stroke="#111"/><path d="M11 28V11H28" fill="none" stroke="#fff" stroke-width="2" stroke-dasharray="2 2"/></svg></span>
        <span class="ib"><svg viewBox="0 0 30 30"><circle cx="11" cy="11" r="9" fill="#cfdbe8" stroke="#222"/><path d="M14 28V14H28V28Z" fill="#4d7aab"/></svg></span>
        <span class="ib"><svg viewBox="0 0 30 30"><circle cx="11" cy="11" r="9" fill="#cfdbe8" stroke="#222"/><path d="M9 28V8H28V28Z" fill="#a3bcd8" stroke="#111"/><path d="M16 28V15H28V28Z" fill="#4d7aab"/><path d="M11 28V11H28" fill="none" stroke="#fff" stroke-width="2" stroke-dasharray="2 2"/></svg></span>
      </div>
    </div>
    <div class="slider">
      <div class="bar"><span>Blur (%)</span><span>0.0</span></div>
      <span class="spin narrow"><i class="up dis"></i><i class="dn dis"></i></span>
    </div>
    <div class="slider">
      <div class="bar full"><span>Opacity (%)</span><span>100.0</span></div>
      <span class="spin narrow"><i class="up dis"></i><i class="dn"></i></span>
    </div>
  </section>
</div>

<style>
  :global(body) { margin: 0; overflow: hidden; background: #fff; }
  .app {
    width: 1920px; height: 1080px; display: flex; flex-direction: column; position: relative; overflow: hidden;
    font: 12px "Open Sans", "Liberation Sans", sans-serif; color: #111; background: #fff;
  }
  .defs { position: absolute; }
  svg { display: block; flex-shrink: 0; }
  u { text-decoration-thickness: 1px; text-underline-offset: 2px; }

  .titlebar { height: 23px; display: flex; align-items: center; padding-left: 1px; gap: 4px; flex-shrink: 0; }
  .title { color: #999; font-size: 12px; letter-spacing: .1px; }

  .menubar { height: 20px; display: flex; align-items: center; padding-left: 8px; border-bottom: 1px solid #d9d9d9; flex-shrink: 0; font-size: 11.5px; }
  .menu { margin-right: 13.3px; }

  .toolbar { height: 31px; display: flex; align-items: center; padding-left: 2px; flex-shrink: 0; font-size: 12px; }
  .toolbar .spin { margin-left: 0; }
  .tb { width: 26px; display: flex; justify-content: center; flex-shrink: 0; }
  .sep { width: 1px; height: 18px; background: #bbb; margin: 0 6px 0 5px; flex-shrink: 0; }
  .sep.s2 { margin: 0 5px 0 6px; }
  .lbl { flex-shrink: 0; font-size: 12px; }
  .lx { margin-left: 8px; margin-right: 5px; width: 9px; }
  .ly { margin-left: 9px; margin-right: 4px; width: 9px; }
  .lw { margin-left: 9px; margin-right: 5px; width: 14px; }
  .lh { margin-left: 7px; margin-right: 5px; width: 11px; }
  .lock { width: 28px; display: flex; justify-content: center; flex-shrink: 0; }
  .inp {
    display: inline-flex; align-items: center; height: 21px; border: 1px solid #a8a8a8; background: #fff; box-sizing: border-box;
    padding-left: 4px; flex-shrink: 0; font-size: 12px; overflow: hidden; white-space: nowrap;
  }
  .i44, .i45 { font-size: 11px; letter-spacing: -.3px; padding-left: 4px; }
  .i44 { width: 44px; }
  .i45 { width: 45px; }
  .spin {
    display: inline-flex; flex-direction: column; width: 11px; height: 21px; flex-shrink: 0; margin-left: 1px; background: #e4e4e4;
    border: 1px solid #d0d0d0; box-sizing: border-box; position: relative;
  }
  .spin i { flex: 1; display: flex; align-items: center; justify-content: center; border-bottom: 1px solid #bbb; }
  .spin i:last-child { border-bottom: 0; }
  .up::before { content: ""; border: 3.5px solid transparent; border-top: 0; border-bottom: 4px solid #111; }
  .dn::before { content: ""; border: 3.5px solid transparent; border-bottom: 0; border-top: 4px solid #111; }
  .up.dis::before { border-bottom-color: #999; }
  .dn.dis::before { border-top-color: #999; }
  .sel { display: inline-flex; height: 22px; border: 2px solid #adadad; border-left-width: 1px; border-top-width: 1px; box-sizing: border-box; background: #fff; flex-shrink: 0; align-items: stretch; }
  .sel-t { flex: 1; display: flex; align-items: center; padding-left: 4px; min-width: 0; }
  .chev { width: 17px; background: #dcdcdc; border-left: 1px solid #adadad; display: flex; align-items: center; justify-content: center; flex-shrink: 0; }
  .unit { width: 43px; font-size: 11px; }
  .unit .sel-t { padding-left: 3px; }
  .on { width: 26px; height: 26px; background: #cce8ff; border: 1px solid #99d1ff; box-sizing: border-box; display: flex; align-items: center; justify-content: center; flex-shrink: 0; }

  .main { flex: 1; min-height: 0; display: flex; }
  .tools { width: 34px; flex-shrink: 0; display: flex; flex-direction: column; align-items: center; padding-top: 3px; box-sizing: border-box; }
  .tool { width: 30px; height: 30px; display: flex; align-items: center; justify-content: center; flex-shrink: 0; box-sizing: border-box; }
  .tool svg { width: 25px; height: 25px; }
  .tool.active { height: 28px; margin-bottom: 1px; background: #cce8ff; border: 1px solid #99d1ff; }
  .txt { gap: 0; }
  .ta { font: 700 28px/1 "Liberation Sans", sans-serif; -webkit-text-stroke: .8px #111; color: #111; }
  .tbar { width: 1px; height: 20px; background: #222; margin-left: 0; }
  .sa { font: 700 22px/1 "Liberation Sans", sans-serif; color: #111; }
  .fz { position: absolute; color: #fff; font: 700 17px/1 "Liberation Sans", sans-serif; margin-top: -6px; }
  .tx-1 { font: 700 9px "Open Sans", sans-serif; fill: #fff; text-anchor: middle; }

  .center {
    flex: 1; min-width: 0; display: grid; grid-template-columns: 16px 1fr 23px; grid-template-rows: 16px 1fr 15px;
    background: #fff;
  }
  .corner { background: #f0f0f0; display: flex; align-items: center; justify-content: center; }
  .hruler { grid-column: 2 / 4; background: #f0f0f0; }
  .vruler { background: #f0f0f0; }
  .rt { font: 8.5px "Open Sans", sans-serif; fill: #444; }
  .canvas { position: relative; background: #fff; overflow: hidden; }
  .maze { position: absolute; left: 0; top: 0; }
  .snip { position: absolute; left: 158px; top: 360px; width: 174px; height: 20px; background: #f6f9fc; color: #dde3e8; font-size: 11.5px; padding-left: 32px; box-sizing: border-box; line-height: 20px; }

  .vscroll { background: #f0f0f0; position: relative; border-right: 1px solid #b5b5b5; box-sizing: border-box; }
  .vthumb { position: absolute; left: 2px; top: 0; width: 15px; height: 757px; background: #cdcdcd; }
  .varrow { position: absolute; left: 5px; bottom: 7px; }
  .hscroll { grid-column: 1 / 4; background: #f0f0f0; position: relative; }
  .hthumb { position: absolute; left: 200px; right: 40px; top: 0; height: 15px; background: #cdcdcd; }
  .harrow { position: absolute; left: 21px; top: 2px; }
  .harrow2 { position: absolute; right: 29px; top: 2px; }
  .hcolor { position: absolute; right: 9px; top: 3px; width: 6px; height: 9px; background: linear-gradient(135deg, #2a8a5a, #b04a80); clip-path: polygon(0 0, 100% 50%, 0 100%); }

  .cmds { width: 31px; flex-shrink: 0; display: flex; flex-direction: column; align-items: center; padding-top: 336px; box-sizing: border-box; }
  .cmd { height: 26.3px; width: 26px; display: flex; align-items: center; justify-content: center; flex-shrink: 0; }
  .cmd svg { width: 20px; height: 20px; }
  .csep { width: 16px; height: 1px; background: #bbb; margin: 5px 0 6px; flex-shrink: 0; }
  .tT { font: 700 22px/1 "Liberation Serif", serif; color: #111; }
  .snaps { width: 31px; flex-shrink: 0; display: flex; flex-direction: column; align-items: center; padding-top: 318px; box-sizing: border-box; }
  .sn { height: 26.4px; width: 26px; display: flex; align-items: center; justify-content: center; flex-shrink: 0; box-sizing: border-box; }
  .sn svg { width: 20px; height: 20px; }
  .sn.hit { height: 21px; align-items: flex-end; overflow: hidden; }
  .sn.act { background: #cce8ff; border: 1px solid #99d1ff; }
  .ssep { width: 16px; height: 1px; background: #bbb; margin: 5px 0; flex-shrink: 0; }

  .palette { height: 20px; display: flex; align-items: flex-start; border-top: 1px solid #111; box-sizing: border-box; background: #f0f0f0; flex-shrink: 0; position: relative; }
  .none { width: 16px; height: 16px; flex-shrink: 0; background: #fff; }
  .sw { width: 14px; height: 16px; flex-shrink: 0; }
  .palette .sw:last-of-type { width: 17px; }
  .parrow { margin-left: 1px; margin-top: 2px; }
  .hscroll2 { height: 14px; background: #f0f0f0; position: relative; flex-shrink: 0; }
  .p-thumb { position: absolute; left: 17px; width: 592px; top: 0; height: 14px; background: #cdcdcd; }
  .pa { position: absolute; left: 4px; top: 2px; }
  .pb { position: absolute; left: 1898px; top: 2px; }

  .status { height: 29px; background: #f0f0f0; display: flex; align-items: center; flex-shrink: 0; font-size: 11px; }
  .fs-block { width: 123px; flex-shrink: 0; padding-left: 2px; box-sizing: border-box; }
  .fs-row { display: flex; height: 14px; align-items: center; }
  .fl { width: 40px; flex-shrink: 0; }
  .none-t { margin-left: 28px; font-size: 10.5px; }
  .swatch { width: 56px; height: 14px; background: #000; flex-shrink: 0; }
  .w { margin-left: 3px; font-size: 11px; }
  .o { margin-left: 3px; margin-right: 2px; }
  .o-in { width: 36px; height: 20px; }
  .vline { width: 1px; height: 29px; background: #c4c4c4; margin: 0 1px; flex-shrink: 0; }
  .eye { margin-left: 5px; }
  .lk { margin-left: 7px; }
  .layer { width: 69px; height: 27px; margin-left: 3px; font-weight: 600; font-size: 10.5px; }
  .msg { margin-left: 2px; white-space: nowrap; font-size: 11.4px; }
  .msg b { font-weight: 700; }
  .coords { margin-left: auto; border-left: 1px solid #bbb; width: 70px; height: 29px; padding-left: 3px; box-sizing: border-box; flex-shrink: 0; }
  .cr { display: flex; justify-content: space-between; height: 14.5px; align-items: center; padding-right: 3px; }
  code { font: 10.5px "Liberation Mono", monospace; }
  .z { margin-right: 3px; }
  .z-in { width: 45px; height: 22px; justify-content: center; padding: 0; }
  .status .spin:last-child { margin-right: 2px; height: 22px; }

  .taskbar { height: 40px; flex-shrink: 0; display: flex; align-items: center; background: linear-gradient(90deg, #1d3340, #1c2b44); color: #fff; }
  .start { width: 48px; display: flex; justify-content: center; flex-shrink: 0; }
  .search { width: 288px; height: 40px; background: #f3f3f3; display: flex; align-items: center; padding-left: 11px; box-sizing: border-box; color: #222; font-size: 14px; position: relative; flex-shrink: 0; }
  .search span { margin-left: 10px; }
  .promo { position: absolute; right: 0; top: 0; }
  .tk { width: 49px; height: 40px; display: flex; align-items: center; justify-content: center; flex-shrink: 0; box-sizing: border-box; position: relative; }
  .tk.line { border-bottom: 2px solid #6f9fc8; }
  .tk.cur { background: #4a5c68; border-bottom: 2px solid #6f9fc8; }
  .tray { margin-left: auto; height: 40px; display: flex; align-items: center; flex-shrink: 0; font-size: 13px; }
  .links { font-size: 12px; }
  .more { margin-left: 7px; margin-bottom: 18px; font-size: 14px; line-height: 1; }
  .weather { margin-left: 80px; }
  .temp { margin-left: 9px; font-size: 13.4px; width: 89px; flex-shrink: 0; white-space: nowrap; }
  .caret { margin-left: 14px; }
  .batt { margin-left: 9px; }
  .vol { margin-left: 7px; }
  .clock { margin-left: 5px; width: 64px; display: flex; flex-direction: column; align-items: center; font-size: 12px; line-height: 18px; flex-shrink: 0; }
  .note { margin-left: 15px; margin-right: 23px; }

  .win { position: absolute; left: 1624px; top: 0; width: 296px; height: 400px; background: #f0f0f0; border-left: 1px solid #666; border-bottom: 1px solid #777; box-sizing: border-box; box-shadow: 0 1px 4px rgba(0,0,0,.25); overflow: hidden; font-size: 11.6px; }
  .win-title { height: 31px; background: #fff; display: flex; align-items: center; padding-left: 7px; position: relative; }
  .wt { margin-left: 5px; font-size: 11.6px; }
  .wc { position: absolute; top: 9px; }
  .min { left: 184px; }
  .max { left: 228px; }
  .cls { left: 274px; }
  .dock-head { height: 27px; display: flex; align-items: flex-start; padding-top: 3px; box-sizing: border-box; position: relative; }
  .dt { font-size: 11.6px; margin-left: -1px; line-height: 14px; }
  .dbtn { position: absolute; top: 4px; width: 9px; height: 9px; border: 1px solid #999; border-radius: 2px; display: flex; align-items: center; justify-content: center; background: #eee; }
  .one { left: 264px; }
  .two { left: 285px; }
  .tabs { display: flex; height: 24px; margin-left: 5px; align-items: flex-end; position: relative; z-index: 1; font-size: 11.2px; }
  .tab { height: 22px; display: flex; align-items: center; gap: 4px; box-sizing: border-box; padding-left: 5px; border: 1px solid #dcdcdc; border-bottom: 0; margin-right: -1px; white-space: nowrap; flex-shrink: 0; }
  .t1 { width: 39px; }
  .t2 { width: 86px; }
  .t3 { width: 87px; height: 24px; background: #fff; margin-bottom: -1px; }
  .ico-fill { width: 8px; height: 8px; background: linear-gradient(135deg, #a8c4e4, #f4f8fc); }
  .ico-st { width: 7px; height: 7px; border: 1px solid #bbb; background: #fff; }
  .tab-body { height: 253px; margin-left: 5px; background: #fff; border: 1px solid #dcdcdc; border-right: 0; box-sizing: border-box; padding-top: 9px; }
  .row { display: flex; align-items: center; }
  .row label { width: 81px; text-align: right; margin-right: 5px; flex-shrink: 0; }
  .r-w { height: 22px; }
  .w-in { width: 56px; height: 22px; }
  .caret-t { border-right: 1px solid #000; line-height: 14px; }
  .w-unit { width: 52px; margin-left: 4px; }
  .r-d { height: 23px; margin-top: 4px; }
  .dash { width: 106px; height: 23px; }
  .dash .sel-t { padding-left: 3px; }
  .dash-line { display: block; height: 2px; width: 80px; background: #000; }
  .d-in { width: 38px; height: 23px; margin-left: 1px; border-left: 0; }
  .r-m { height: 26px; margin-top: 4px; gap: 4px; }
  .r-m label { margin-right: 1px; }
  .mark { width: 63px; height: 26px; }
  .mark-line { display: block; height: 2px; width: 14px; background: #444; }
  .r-i { height: 32px; margin-bottom: 6px; gap: 6px; }
  .r-i label { margin-right: -1px; }
  .r-m + .r-i { margin-top: 9px; }
  .ib { width: 32px; height: 32px; background: #e1e1e1; border: 1px solid #adadad; box-sizing: border-box; display: flex; align-items: center; justify-content: center; flex-shrink: 0; }
  .ib svg { width: 30px; height: 30px; }
  .ib.ac { background: #cce4f7; border-color: #005499; }
  .m-in { width: 44px; height: 22px; margin-left: -1px; }
  .r-i .spin { margin-left: -6px; height: 22px; }
  .slider { display: flex; height: 23px; margin: 5px 0 0 5px; align-items: stretch; }
  .bar { width: 282px; display: flex; justify-content: space-between; align-items: center; padding: 0 3px 0 5px; box-sizing: border-box; background: #fff; border: 1px solid #adadad; flex-shrink: 0; }
  .bar.full { background: #b5c0c9; box-shadow: inset 0 0 0 2px #fff; border-bottom: 2px solid #000; }
  .narrow { width: 8px; height: 23px; margin-left: 1px; }
</style>
